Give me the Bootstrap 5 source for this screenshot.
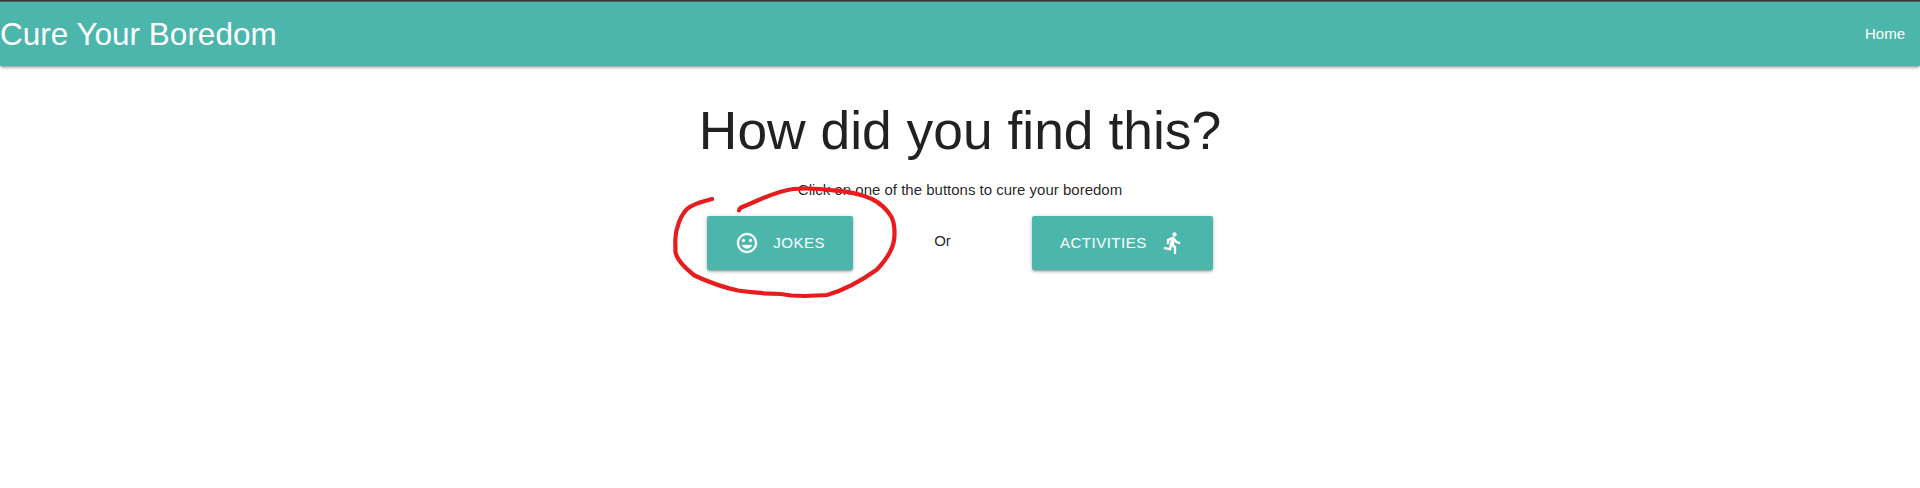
<!DOCTYPE html>
<html lang="en">
<head>
<meta charset="utf-8">
<meta name="viewport" content="width=device-width, initial-scale=1">
<title>Cure Your Boredom</title>
<link href="https://cdn.jsdelivr.net/npm/bootstrap@5.3.0/dist/css/bootstrap.min.css" rel="stylesheet">
<style>
  body { font-family: "Liberation Sans", Arial, sans-serif; font-size: 15px; line-height: 1.5; color: rgba(0,0,0,.87); background: #fff; min-height: 100vh; }
  .top-edge { height: 2px; background: linear-gradient(#3c3c3c 50%, #56625f 50%); }
  .teal { background: #4db6ac; }
  .raised { box-shadow: 0 2px 2px 0 rgba(0,0,0,.14), 0 3px 1px -2px rgba(0,0,0,.12), 0 1px 5px 0 rgba(0,0,0,.2); }
  .site-nav { height: 64px; }
  .site-nav .navbar-brand { font-size: 31.5px; line-height: 64px; }
  .site-nav .navbar-nav .nav-link { font-size: 15px; line-height: 64px; padding: 0 15px; }
  .headline { font-size: 53.4px; line-height: 58.7px; font-weight: 400; margin: 35.6px 0 18.7px; }
  .btn-big { --bs-btn-color: #fff; --bs-btn-hover-color: #fff; --bs-btn-hover-bg: #5fc0b7; height: 54px; padding: 0 27.8px; gap: 14.5px; border: 0; border-radius: 2px; font-size: 15px; letter-spacing: .5px; }
  .btn-big svg { stroke: currentColor; stroke-width: .3; }
  .choices { width: 506px; margin-top: 14.5px; }
  .scribble { left: 670px; top: 180px; pointer-events: none; }
</style>
</head>
<body class="position-relative">
<div class="top-edge"></div>
<nav class="navbar navbar-expand site-nav teal raised p-0">
  <a class="navbar-brand text-white p-0 m-0" href="#">Cure Your Boredom</a>
  <ul class="navbar-nav ms-auto">
    <li class="nav-item"><a class="nav-link text-white" href="#">Home</a></li>
  </ul>
</nav>
<main class="d-flex flex-column align-items-center text-center">
  <h2 class="headline">How did you find this?</h2>
  <p class="mb-0">Click on one of the buttons to cure your boredom</p>
  <div class="choices d-flex justify-content-between align-items-center">
    <a href="#" class="btn btn-big teal raised d-inline-flex align-items-center text-uppercase">
      <svg width="24" height="24" viewBox="0 0 24 24" fill="currentColor"><path d="M11.99 2C6.47 2 2 6.48 2 12s4.47 10 9.99 10C17.52 22 22 17.52 22 12S17.52 2 11.99 2zM12 20c-4.42 0-8-3.58-8-8s3.58-8 8-8 8 3.58 8 8-3.58 8-8 8zm3.5-9c.83 0 1.5-.67 1.5-1.5S16.33 8 15.5 8 14 8.67 14 9.5s.67 1.5 1.5 1.5zm-7 0c.83 0 1.5-.67 1.5-1.5S9.33 8 8.5 8 7 8.67 7 9.5 7.67 11 8.5 11zm3.5 6.5c2.33 0 4.31-1.46 5.11-3.5H6.89c.8 2.04 2.78 3.5 5.11 3.5z"/></svg>
      <span>Jokes</span>
    </a>
    <span class="pb-1 lh-1">Or</span>
    <a href="#" class="btn btn-big teal raised d-inline-flex align-items-center text-uppercase">
      <span>Activities</span>
      <svg width="24" height="24" viewBox="0 0 24 24" fill="currentColor"><path d="M13.49 5.48c1.1 0 2-.9 2-2s-.9-2-2-2-2 .9-2 2 .9 2 2 2zm-3.6 13.9l1-4.4 2.1 2v6h2v-7.5l-2.1-2 .6-3c1.3 1.5 3.3 2.5 5.5 2.5v-2c-1.9 0-3.5-1-4.3-2.4l-1-1.6c-.4-.6-1-1-1.7-1-.3 0-.5.1-.8.1l-5.2 2.2v4.7h2v-3.4l1.8-.7-1.6 8.1-4.9-1-.4 2 7 1.4z"/></svg>
    </a>
  </div>
</main>
<svg class="scribble position-absolute" width="230" height="124" viewBox="670 180 230 124" fill="none" stroke="#e81c1c" stroke-width="4.200" stroke-linecap="round" stroke-linejoin="round">
  <path d="M712 199C704 201 692 204.500 687 209C681 215 675.500 228 675.300 240L675.500 252C676.500 259 685 268 694.500 275.500C704 280 717 286 738 290.500C747 292 756 292.500 764 293.300L781 294L791 295.500L805 296L827 295C841 291 861 281 877 269.500C886 260 893.500 248 894.300 238C895 229 894 222 891.500 217C886 208 879 202.500 872 199C860 194 847 191 831 190.200C819 188.500 807 188 793 189C774 191.500 758 201 741 207.500Q739 209 739 210.500"/>
</svg>
<script src="https://cdn.jsdelivr.net/npm/bootstrap@5.3.0/dist/js/bootstrap.bundle.min.js"></script>
</body>
</html>
